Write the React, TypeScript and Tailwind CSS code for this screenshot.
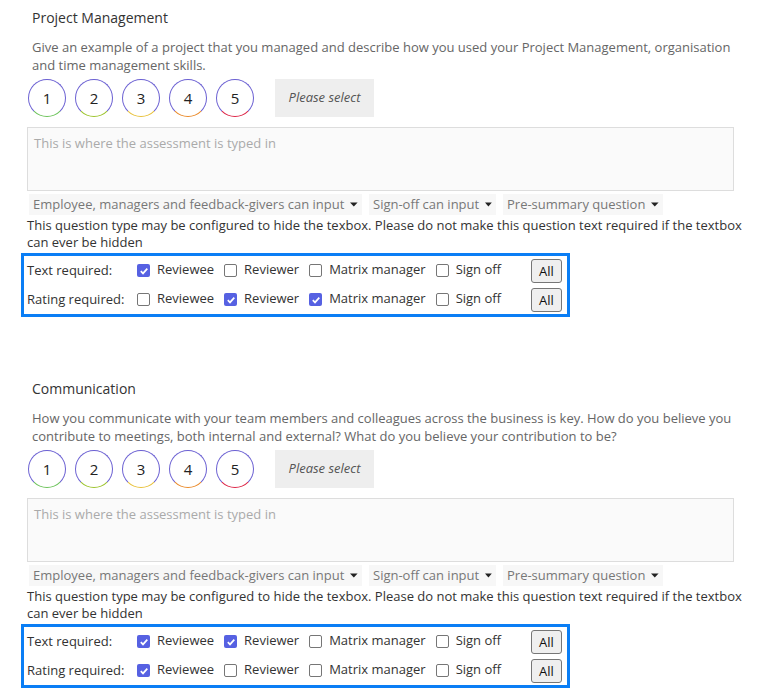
import React from 'react';

type Role = 'Reviewee' | 'Reviewer' | 'Matrix manager' | 'Sign off';

interface Question {
  title: string;
  description: string[];
  textRequired: Role[];
  ratingRequired: Role[];
}

const ROLES: Role[] = ['Reviewee', 'Reviewer', 'Matrix manager', 'Sign off'];

const RATING_COLORS = [
  'border-b-[#6cc35a]',
  'border-b-[#9cc42c]',
  'border-b-[#e8c13a]',
  'border-b-[#ea8a2a]',
  'border-b-[#dd2446]',
];

const questions: Question[] = [
  {
    title: 'Project Management',
    description: [
      'Give an example of a project that you managed and describe how you used your Project Management, organisation',
      'and time management skills.',
    ],
    textRequired: ['Reviewee'],
    ratingRequired: ['Reviewer', 'Matrix manager'],
  },
  {
    title: 'Communication',
    description: [
      'How you communicate with your team members and colleagues across the business is key. How do you believe you',
      'contribute to meetings, both internal and external? What do you believe your contribution to be?',
    ],
    textRequired: ['Reviewee', 'Reviewer'],
    ratingRequired: ['Reviewee'],
  },
];

const Checkbox: React.FC<{ checked: boolean }> = ({ checked }) =>
  checked ? (
    <span className="flex h-[13px] w-[13px] items-center justify-center rounded-[2px] bg-[#5661e2]">
      <svg width="10" height="10" viewBox="0 0 10 10">
        <path d="M1.8 5.2 L4 7.4 L8.3 2.6" fill="none" stroke="#fff" strokeWidth="1.7" />
      </svg>
    </span>
  ) : (
    <span className="h-[13px] w-[13px] rounded-[2px] border border-[#767676] bg-white" />
  );

const Dropdown: React.FC<{ label: string; className: string }> = ({ label, className }) => (
  <div className={`flex h-[21px] items-center gap-[6px] whitespace-nowrap bg-[#f7f7f7] px-[4px] text-[#777] ${className}`}>
    <span>{label}</span>
    <svg width="9" height="5" viewBox="0 0 9 5">
      <path d="M0 0 H9 L4.5 5 Z" fill="#222" />
    </svg>
  </div>
);

const RequiredRow: React.FC<{ label: string; selected: Role[] }> = ({ label, selected }) => (
  <div className="flex h-[29px] items-center">
    <div className="w-[113px] shrink-0 pl-[3px]">{label}</div>
    {ROLES.map(role => (
      <div key={role} className="mr-[10px] flex items-center gap-[7px]">
        <Checkbox checked={selected.includes(role)} />
        <span className="-mt-[2px]">{role}</span>
      </div>
    ))}
    <button className="ml-auto mr-[5px] h-[24px] w-[31px] rounded-[3px] border border-[#767676] bg-[#efefef] pt-[2px] text-[13px] text-[#111]">
      All
    </button>
  </div>
);

const QuestionBlock: React.FC<{ q: Question }> = ({ q }) => (
  <div className="pl-[27px]">
    <div className="pl-[5px] pt-[8px] text-[14px] leading-[20px] text-[#333]">{q.title}</div>
    <div className="mt-[10px] pl-[5px] text-[13px] leading-[18px] text-[#666]">
      {q.description.map(line => (
        <div key={line}>{line}</div>
      ))}
    </div>
    <div className="mt-[5px] flex items-center pl-[1px]">
      {[1, 2, 3, 4, 5].map((n, i) => (
        <div
          key={n}
          className={`mr-[9px] flex h-[38px] w-[38px] items-center justify-center rounded-full border-[1.5px] border-[#6a5fd2] ${RATING_COLORS[i]} text-[15px] text-[#222]`}
        >
          {n}
        </div>
      ))}
      <div className="ml-[12px] flex h-[38px] w-[99px] items-center justify-center bg-[#eeeeee] text-[13px] italic text-[#555]">
        Please select
      </div>
    </div>
    <div className="mt-[10px] h-[64px] w-[707px] border border-[#dddddd] bg-[#fafafa] px-[6px] pt-[6px] text-[13px] text-[#aaa]">
      This is where the assessment is typed in
    </div>
    <div className="mt-[3px] flex gap-[7px] pl-[2px] text-[13px]">
      <Dropdown label="Employee, managers and feedback-givers can input" className="w-[333px]" />
      <Dropdown label="Sign-off can input" className="w-[127px]" />
      <Dropdown label="Pre-summary question" className="w-[160px]" />
    </div>
    <div className="mt-[2px] w-[730px] text-[13px] leading-[17px] text-[#333]">
      This question type may be configured to hide the texbox. Please do not make this question text required if the textbox can ever be hidden
    </div>
    <div className="-ml-[6px] mt-[2px] w-[549px] border-[3px] border-[#0a7ef5] text-[13px] text-[#333]">
      <RequiredRow label="Text required:" selected={q.textRequired} />
      <RequiredRow label="Rating required:" selected={q.ratingRequired} />
    </div>
  </div>
);

export default function App() {
  return (
    <div className="min-h-[695px] w-[783px] bg-white font-['Open_Sans',sans-serif]">
      <QuestionBlock q={questions[0]} />
      <div className="h-[54px]" />
      <QuestionBlock q={questions[1]} />
    </div>
  );
}
